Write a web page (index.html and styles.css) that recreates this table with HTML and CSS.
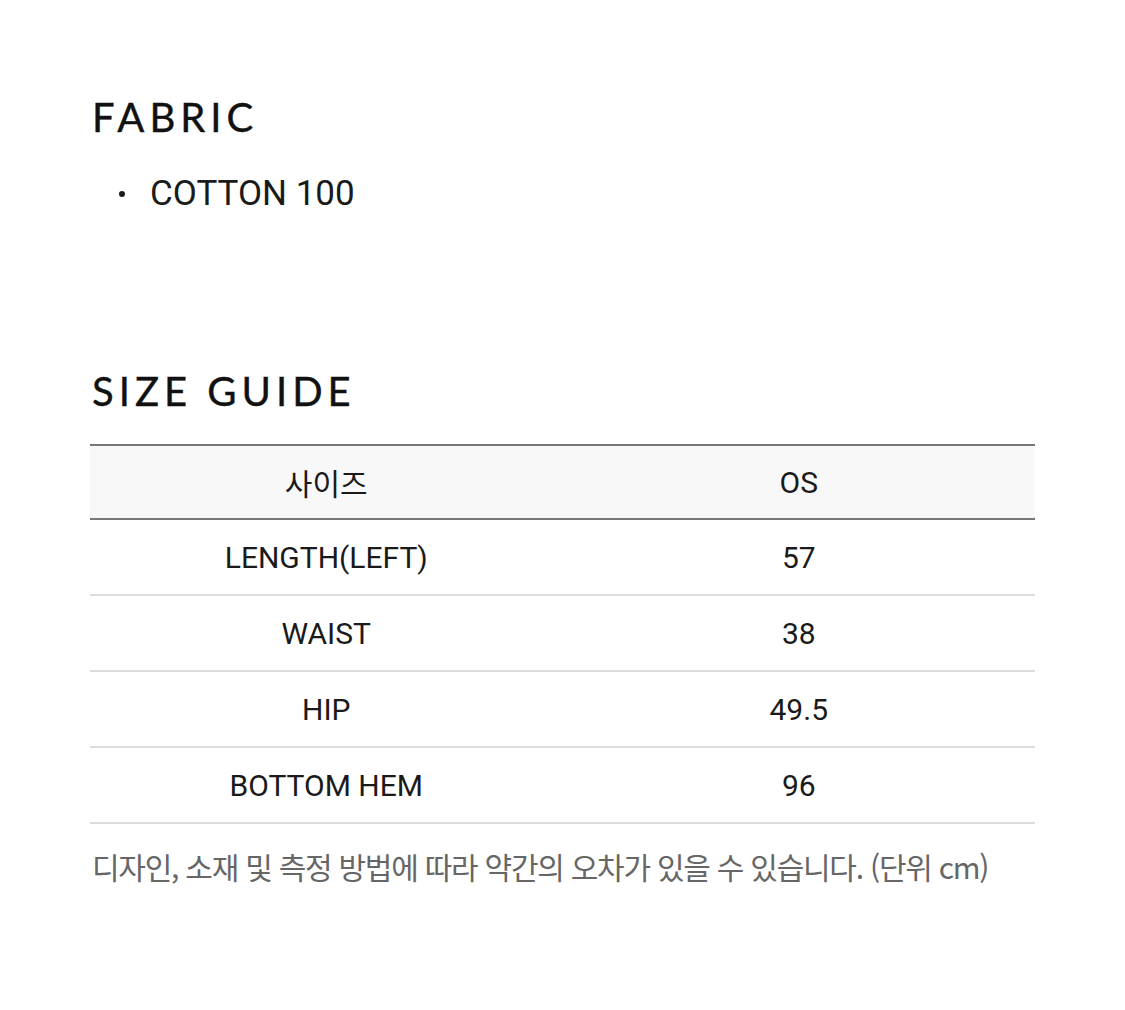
FILE: index.html
```html
<!DOCTYPE html>
<html lang="ko">
<head>
<meta charset="utf-8">
<link rel="stylesheet" href="styles.css">
</head>
<body>
<main class="page">
  <section class="block fabric">
    <h2 class="heading">FABRIC</h2>
    <ul class="list">
      <li>COTTON 100</li>
    </ul>
  </section>
  <section class="block size">
    <h2 class="heading">SIZE GUIDE</h2>
    <table class="size-table">
      <thead>
        <tr><th>사이즈</th><th>OS</th></tr>
      </thead>
      <tbody>
        <tr><td>LENGTH(LEFT)</td><td>57</td></tr>
        <tr><td>WAIST</td><td>38</td></tr>
        <tr><td>HIP</td><td>49.5</td></tr>
        <tr><td>BOTTOM HEM</td><td>96</td></tr>
      </tbody>
    </table>
    <p class="note">디자인, 소재 및 측정 방법에 따라 약간의 오차가 있을 수 있습니다. (단위 cm)</p>
  </section>
</main>
</body>
</html>
```

FILE: styles.css
```css
html, body {
  margin: 0;
  padding: 0;
  background: #ffffff;
}
body {
  font-family: Roboto, "Noto Sans CJK KR", sans-serif;
  color: #1a1a1a;
}
.page {
  width: 945px;
  padding: 0 0 0 90px;
}
.heading {
  font-family: Lato, "Noto Sans", sans-serif;
  font-weight: 400;
  font-size: 40px;
  letter-spacing: 5px;
  line-height: 40px;
  margin: 0;
  padding-left: 2px;
  color: #111;
  -webkit-text-stroke: 0.4px #111;
}
.fabric {
  padding-top: 97px;
}
.list {
  list-style: none;
  margin: 37px 0 0 0;
  padding: 0 0 0 60px;
  font-size: 35px;
  line-height: 40px;
  color: #1a1a1a;
}
.list li {
  position: relative;
}
.list li::before {
  content: "";
  position: absolute;
  left: -31px;
  top: 17px;
  width: 6px;
  height: 6px;
  border-radius: 50%;
  background: #1a1a1a;
}
.size {
  padding-top: 157px;
}
.size-table {
  width: 945px;
  margin-top: 33px;
  border-collapse: collapse;
  font-size: 30px;
  color: #1a1a1a;
}
.size-table th,
.size-table td {
  width: 50%;
  text-align: center;
  font-weight: 400;
  height: 74px;
  padding: 0;
  border-bottom: 2px solid #dcdcdc;
}
.size-table thead th {
  height: 72px;
  background: #f8f8f8;
  border-top: 2px solid #777;
  border-bottom: 2px solid #777;
}
.note {
  margin: 20px 0 0 2px;
  font-family: "Noto Sans CJK KR", Roboto, sans-serif;
  font-size: 30px;
  letter-spacing: -1.25px;
  color: #666;
}
```
